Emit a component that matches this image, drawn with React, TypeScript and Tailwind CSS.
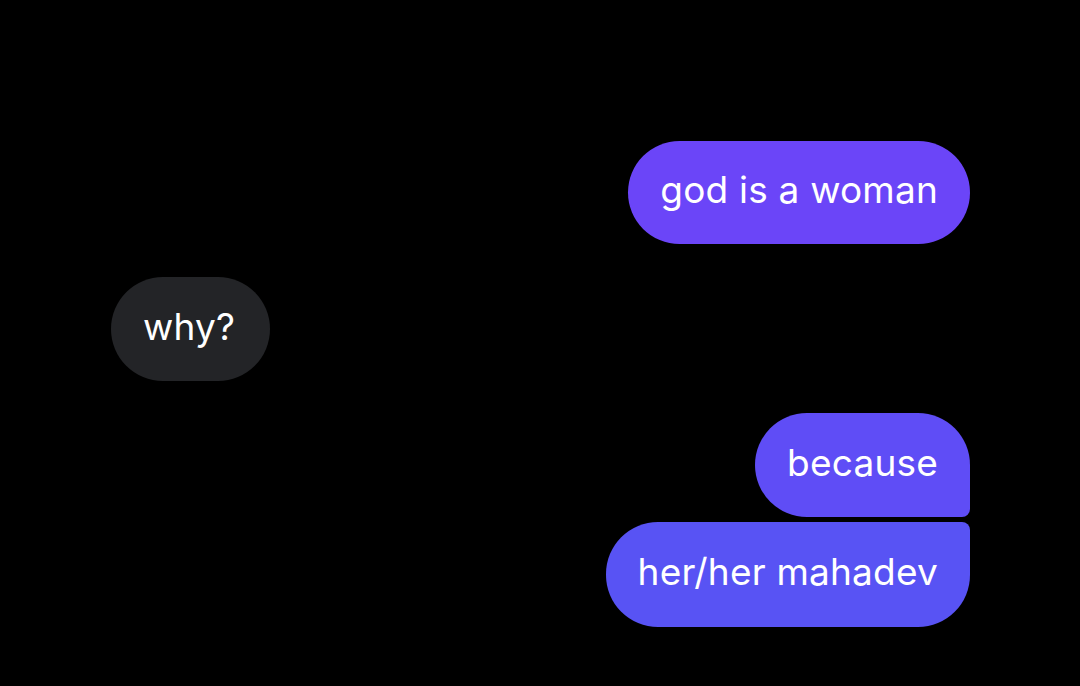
export default function App() {
  const font = { fontFamily: 'Inter, "Noto Sans", sans-serif' };
  return (
    <div className="w-[1080px] h-[686px] bg-black overflow-hidden flex flex-col px-[110px] pt-[141px]" style={font}>
      <div className="self-end h-[103px] rounded-[52px] bg-[#6b45f8] px-8 pb-[5px] flex items-center text-white text-[37px] tracking-[0.2px]">
        god is a woman
      </div>
      <div className="mt-[33px] self-start h-[104px] ml-px rounded-[52px] bg-[#232427] pl-8 pr-[35px] pb-[5px] flex items-center text-white text-[37px] tracking-[0.2px]">
        why?
      </div>
      <div className="mt-[32px] self-end h-[104px] rounded-tl-[52px] rounded-bl-[52px] rounded-tr-[52px] rounded-br-[8px] bg-[#5f4df6] px-8 pb-[5px] flex items-center text-white text-[37px] tracking-[0.2px]">
        because
      </div>
      <div className="mt-[5px] self-end h-[105px] rounded-tl-[52px] rounded-bl-[52px] rounded-tr-[8px] rounded-br-[52px] bg-[#5853f4] px-8 pb-[5px] flex items-center text-white text-[37px] tracking-[0.2px]">
        her/her mahadev
      </div>
    </div>
  );
}
